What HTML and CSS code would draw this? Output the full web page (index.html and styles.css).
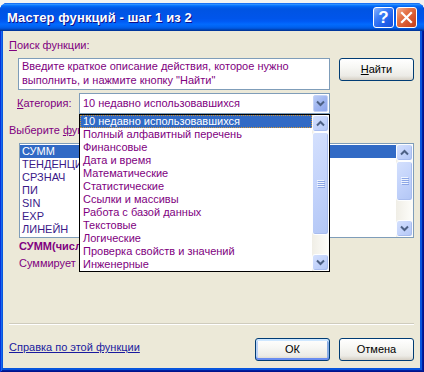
FILE: index.html
```html
<!DOCTYPE html>
<html lang="ru">
<head>
<meta charset="utf-8">
<title>Мастер функций</title>
<link rel="stylesheet" href="styles.css">
</head>
<body>
<div class="window">
  <div class="titlebar">
    <span class="title">Мастер функций - шаг 1 из 2</span>
    <div class="tb-buttons">
      <span class="tb-btn help">?</span>
      <span class="tb-btn close"><svg viewBox="0 0 19 19" width="19" height="19"><path d="M5 5 L14 14 M14 5 L5 14" stroke="#fff" stroke-width="2.2" stroke-linecap="square"/></svg></span>
    </div>
  </div>
  <div class="client">
    <div class="label"><u>П</u>оиск функции:</div>
    <div class="search-row">
      <div class="search-box">Введите краткое описание действия, которое нужно выполнить, и нажмите кнопку "Найти"</div>
      <button class="btn find"><u>Н</u>айти</button>
    </div>
    <div class="cat-row">
      <span class="label cat-label"><u>К</u>атегория:</span>
      <div class="combo-wrap">
        <div class="combo">
          <span class="combo-text">10 недавно использовавшихся</span>
          <span class="combo-btn"><svg viewBox="0 0 9 7" width="9" height="7"><path d="M1 1.5 L4.5 5 L8 1.5" fill="none" stroke="#4D6185" stroke-width="2"/></svg></span>
        </div>
        <div class="dropdown">
          <ul class="dd-list">
            <li class="sel">10 недавно использовавшихся</li>
            <li>Полный алфавитный перечень</li>
            <li>Финансовые</li>
            <li>Дата и время</li>
            <li>Математические</li>
            <li>Статистические</li>
            <li>Ссылки и массивы</li>
            <li>Работа с базой данных</li>
            <li>Текстовые</li>
            <li>Логические</li>
            <li>Проверка свойств и значений</li>
            <li>Инженерные</li>
          </ul>
          <div class="vscroll">
            <div class="sb-btn"><svg viewBox="0 0 9 7" width="9" height="7"><path d="M1 5.5 L4.5 2 L8 5.5" fill="none" stroke="#4D6185" stroke-width="2"/></svg></div>
            <div class="sb-thumb dd-thumb"><svg viewBox="0 0 8 8" width="8" height="8"><path d="M0 0.5H7M0 2.5H7M0 4.5H7M0 6.5H7" stroke="#EEF4FE"/><path d="M1 1.5H8M1 3.5H8M1 5.5H8M1 7.5H8" stroke="#8CA6E6"/></svg></div>
            <div class="sb-track"></div>
            <div class="sb-btn"><svg viewBox="0 0 9 7" width="9" height="7"><path d="M1 1.5 L4.5 5 L8 1.5" fill="none" stroke="#4D6185" stroke-width="2"/></svg></div>
          </div>
        </div>
      </div>
    </div>
    <div class="label pick-label">Выберите <u>ф</u>ункцию:</div>
    <div class="func-list">
      <ul class="fl-items">
        <li class="sel">СУММ</li>
        <li>ТЕНДЕНЦИЯ</li>
        <li>СРЗНАЧ</li>
        <li>ПИ</li>
        <li>SIN</li>
        <li>EXP</li>
        <li>ЛИНЕЙН</li>
      </ul>
      <div class="vscroll">
        <div class="sb-btn"><svg viewBox="0 0 9 7" width="9" height="7"><path d="M1 5.5 L4.5 2 L8 5.5" fill="none" stroke="#4D6185" stroke-width="2"/></svg></div>
        <div class="sb-thumb fl-thumb"><svg viewBox="0 0 8 8" width="8" height="8"><path d="M0 0.5H7M0 2.5H7M0 4.5H7M0 6.5H7" stroke="#EEF4FE"/><path d="M1 1.5H8M1 3.5H8M1 5.5H8M1 7.5H8" stroke="#8CA6E6"/></svg></div>
        <div class="sb-track"></div>
        <div class="sb-btn"><svg viewBox="0 0 9 7" width="9" height="7"><path d="M1 1.5 L4.5 5 L8 1.5" fill="none" stroke="#4D6185" stroke-width="2"/></svg></div>
      </div>
    </div>
    <div class="sig">СУММ(число1;число2;...)</div>
    <div class="desc">Суммирует аргументы.</div>
    <div class="bottom">
      <div class="sep"></div>
      <div class="footer">
        <a class="help-link" href="#">Справка по этой функции</a>
        <div class="actions">
          <button class="btn default">ОК</button>
          <button class="btn">Отмена</button>
        </div>
      </div>
    </div>
  </div>
</div>
</body>
</html>
```
FILE: styles.css
```css
* { box-sizing: border-box; }
html, body { margin: 0; padding: 0; }
body {
  width: 424px;
  height: 372px;
  overflow: hidden;
  background: #F3F3F1;
  font-family: "Liberation Sans", Arial, sans-serif;
  font-size: 11px;
  line-height: 13px;
  color: #800080;
}
ul { list-style: none; margin: 0; padding: 0; }
u { text-decoration: underline; text-underline-offset: 1px; }

.window {
  margin-top: 3px;
  height: 369px;
  display: flex;
  flex-direction: column;
  background: #0855DD;
  border-radius: 8px 8px 0 0;
  box-shadow: inset 1px 0 #0831D9, inset -1px -1px #00138C, inset 2px 0 #166AEE, inset -2px -2px #001EA0;
}

.titlebar {
  height: 28px;
  flex: none;
  display: flex;
  justify-content: space-between;
  align-items: flex-start;
  border-radius: 7px 7px 0 0;
  background: linear-gradient(to bottom, #0058EE 0%, #3593FF 4%, #288EFF 6%, #127DFF 8%, #036FFC 10%, #0262EE 14%, #0057E5 20%, #0054E3 24%, #0055EB 56%, #005BF5 66%, #026AFE 76%, #0062EF 86%, #0052D6 92%, #0040AB 96%, #003092 100%);
  padding: 0 7px 0 7px;
}
.title {
  margin-top: 7px;
  font-size: 13px;
  line-height: 16px;
  font-weight: bold;
  color: #fff;
  text-shadow: 1px 1px #0F1089;
  letter-spacing: 0.1px;
}
.tb-buttons {
  margin-top: 4px;
  display: flex;
  gap: 2px;
}
.tb-btn {
  width: 21px;
  height: 21px;
  border: 1px solid #fff;
  border-radius: 3px;
  display: flex;
  align-items: center;
  justify-content: center;
  color: #fff;
}
.help {
  background: linear-gradient(135deg, #8AB4FD 0%, #3D7EF7 35%, #1F5EEA 70%, #1A50D8 100%);
  font-weight: bold;
  font-size: 17px;
  line-height: 19px;
}
.close {
  background: linear-gradient(135deg, #F2AE92 0%, #E57448 35%, #D5522B 70%, #C2401C 100%);
}

.client {
  flex: 1;
  margin: 0 4px 4px 3px;
  background: #ECE9D8;
  display: flex;
  flex-direction: column;
  padding: 8px 6px 7px 6px;
}

.label { color: #800080; }

.search-row {
  display: flex;
  align-items: flex-start;
  margin-top: 6px;
}
.search-box {
  margin-left: 9px;
  width: 312px;
  height: 32px;
  border: 1px solid #7F9DB9;
  background: #fff;
  padding: 0 3px;
  line-height: 14px;
  color: #800080;
}
.btn {
  width: 75px;
  height: 23px;
  padding: 0;
  border: 1px solid #003C74;
  border-radius: 3px;
  background: linear-gradient(to bottom, #FFFFFF 0%, #F7F7F4 40%, #ECEBE6 80%, #D6D0C5 100%);
  font-family: "Liberation Sans", Arial, sans-serif;
  font-size: 11px;
  line-height: 13px;
  color: #000;
}
.find { margin-left: 9px; }
.btn.default {
  box-shadow: inset 0 2px 0 #CEE7FF, inset 0 -2px 0 #698CF0, inset 2px 0 0 #B9D1F6, inset -2px 0 0 #89ADE4;
}

.cat-row {
  display: flex;
  align-items: center;
  margin-top: 3px;
}
.cat-label {
  margin-left: 8px;
  width: 62px;
}
.combo-wrap {
  position: relative;
  width: 251px;
}
.combo {
  height: 21px;
  border: 1px solid #7F9DB9;
  background: #fff;
  display: flex;
  align-items: center;
  justify-content: space-between;
  padding-left: 3px;
}
.combo-text { color: #800080; }
.combo-btn {
  width: 15px;
  height: 17px;
  margin-right: 1px;
  border-radius: 2px;
  border: 1px solid #C3D2F6;
  background: linear-gradient(135deg, #BACCF7 0%, #A0B6F0 50%, #8CA4EC 100%);
  display: flex;
  align-items: center;
  justify-content: center;
}

.dropdown {
  position: absolute;
  top: 100%;
  left: 0;
  width: 251px;
  height: 158px;
  border: 1px solid #000;
  background: #fff;
  display: flex;
  z-index: 5;
}
.dd-list { flex: 1; }
.dd-list li {
  height: 13px;
  padding-left: 3px;
  white-space: nowrap;
  color: #800080;
}
.dd-list li.sel {
  background: #316AC5;
  color: #fff;
  outline: 1px dotted #CE953A;
  outline-offset: -1px;
}

.vscroll {
  width: 17px;
  flex: none;
  display: flex;
  flex-direction: column;
  background: linear-gradient(to right, #F0EEE6, #FDFDFA);
}
.sb-btn, .sb-thumb {
  height: 17px;
  flex: none;
  border: 1px solid #FDFEFF;
  border-radius: 3px;
  background: linear-gradient(135deg, #D4E0FD 0%, #C3D3FB 50%, #B2C6F5 100%);
  box-shadow: inset -1px -1px 0 #A8BCEE;
  display: flex;
  align-items: center;
  justify-content: center;
}
.dd-thumb { height: 103px; }
.fl-thumb { height: 40px; }
.sb-track { flex: 1; }

.pick-label { margin-top: 10px; }

.func-list {
  margin-top: 6px;
  margin-left: 10px;
  width: 395px;
  height: 95px;
  border: 1px solid #7F9DB9;
  background: #fff;
  display: flex;
}
.fl-items {
  flex: 1;
  padding-top: 1px;
}
.fl-items li {
  height: 13px;
  padding-left: 2px;
  color: #3A1888;
}
.fl-items li.sel {
  background: #316AC5;
  color: #fff;
}

.sig {
  margin-top: 2px;
  margin-left: 10px;
  font-weight: bold;
  color: #800080;
}
.desc {
  margin-top: 4px;
  margin-left: 10px;
  color: #800080;
}

.bottom { margin-top: auto; }
.sep {
  height: 2px;
  border-top: 1px solid #CFCCBD;
  border-bottom: 1px solid #FFFFFF;
}
.footer {
  margin-top: 13px;
  display: flex;
  justify-content: space-between;
  align-items: flex-start;
}
.help-link {
  margin-top: 3px;
  color: #1A1A9E;
  text-decoration: underline;
}
.actions {
  display: flex;
  gap: 9px;
}
```
